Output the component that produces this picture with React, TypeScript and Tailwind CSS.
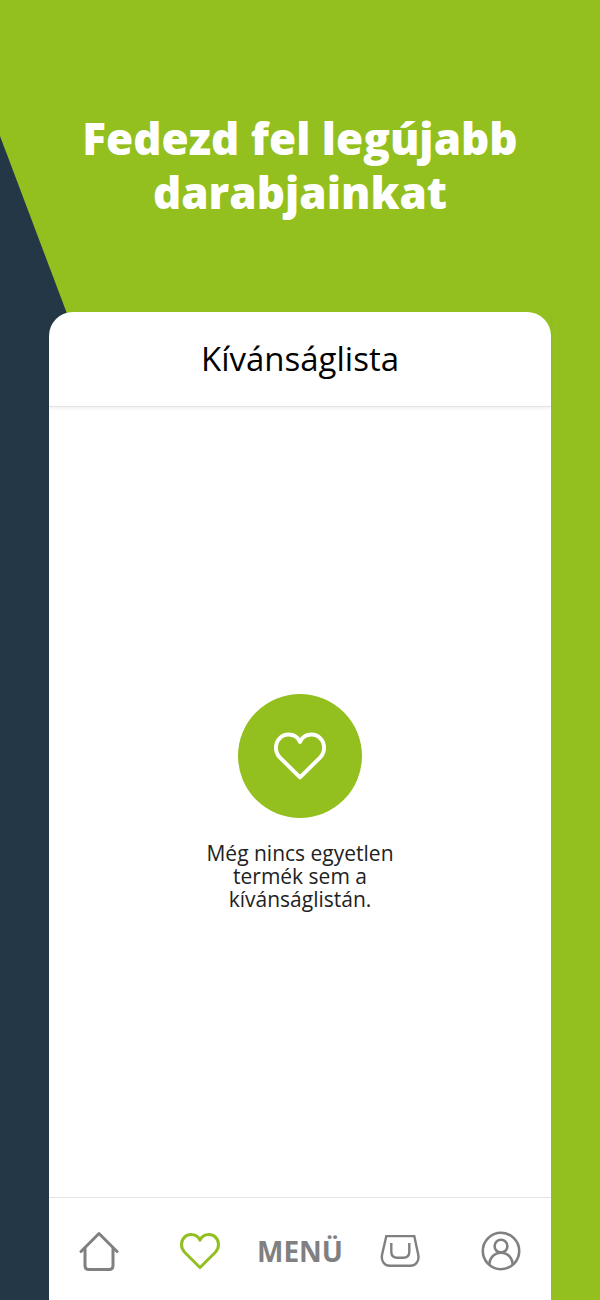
import type { ReactNode } from "react";

function Heart({ className, strokeWidth }: { className: string; strokeWidth: number }) {
  return (
    <svg viewBox="0 0 40 40" fill="none" stroke="currentColor" strokeWidth={strokeWidth} strokeLinejoin="round" className={className} aria-hidden="true">
      <path d="M20 36.5 4.6 21.2C2.6 19.2 1.5 16.6 1.5 13.6C1.5 7.8 5.8 3.5 11.2 3.5C15.2 3.5 18.4 5.6 20 9.2C21.6 5.6 24.8 3.5 28.8 3.5C34.2 3.5 38.5 7.8 38.5 13.6C38.5 16.6 37.4 19.2 35.4 21.2Z" />
    </svg>
  );
}

function House() {
  return (
    <svg viewBox="0 0 40 40" fill="none" stroke="currentColor" strokeWidth="3" strokeLinecap="round" strokeLinejoin="round" className="size-10" aria-hidden="true">
      <path d="M2 20.5 20 2.5 38 20.5" />
      <path d="M6 17V34.5Q6 38.5 10 38.5H30Q34 38.5 34 34.5V17" />
    </svg>
  );
}

function Bag() {
  return (
    <svg viewBox="0 0 40 40" fill="none" stroke="currentColor" strokeWidth="2.4" strokeLinejoin="miter" className="size-10" aria-hidden="true">
      <path d="M6.3 5.1H34.3L38.2 23.5C39.5 29.5 36.2 34.7 30.5 34.7H9.8C4 34.7 0.9 29.5 2.1 23.5Z" />
      <path d="M11.3 12V20.8Q11.3 26.8 17.3 26.8H23.3Q29.3 26.8 29.3 20.8V12" />
    </svg>
  );
}

function Person() {
  return (
    <svg viewBox="0 0 40 40" fill="none" stroke="currentColor" strokeWidth="2.6" className="size-10" aria-hidden="true">
      <circle cx="20" cy="20" r="18.2" />
      <circle cx="20" cy="15.2" r="6.4" />
      <path d="M8.4 34C8.4 26.8 13.4 21.8 20 21.8S31.6 26.8 31.6 34" />
    </svg>
  );
}

function Tab({ label, active, children }: { label: string; active?: boolean; children: ReactNode }) {
  return (
    <a
      href="#"
      aria-label={label}
      aria-current={active ? "page" : undefined}
      className={active ? "flex items-center justify-center text-[#92bf20]" : "flex items-center justify-center text-[#808080]"}
    >
      {children}
    </a>
  );
}

export default function App() {
  return (
    <div className="relative isolate flex min-h-screen flex-col bg-[#93c01f] font-['Open_Sans',sans-serif]">
      <div className="absolute inset-0 -z-10 bg-[#243746] [clip-path:polygon(0_136px,439px_1300px,439px_100%,0_100%)]" />

      <div className="px-12 pt-[111px] pb-[93px]">
        <h1 className="text-center text-[44px] leading-[54px] font-extrabold text-white">
          Fedezd fel legújabb
          <br />
          darabjainkat
        </h1>
      </div>

      <main className="mx-[49px] flex grow flex-col rounded-t-3xl bg-white">
        <header className="border-b border-[#e4e4e4] px-6 py-6 shadow-[0_2px_3px_rgba(0,0,0,0.05)]">
          <h2 className="text-center text-[33px] leading-[46px] font-medium text-black">Kívánságlista</h2>
        </header>

        <section className="flex grow flex-col items-center justify-center gap-6">
          <div className="flex size-[124px] items-center justify-center rounded-full bg-[#93c01f] text-white">
            <Heart className="size-[52px]" strokeWidth={3} />
          </div>
          <p className="text-center text-[21px] leading-[23px] font-medium text-[#222222]">
            Még nincs egyetlen
            <br />
            termék sem a
            <br />
            kívánságlistán.
          </p>
        </section>

        <nav aria-label="Menü" className="grid h-[103px] grid-cols-5 border-t border-[#e2e4e5] pt-[3px]">
          <Tab label="Kezdőlap"><House /></Tab>
          <Tab label="Kívánságlista" active><Heart className="size-10" strokeWidth={3} /></Tab>
          <Tab label="Menü"><span className="text-[28px] leading-8 font-bold">MENÜ</span></Tab>
          <Tab label="Kosár"><Bag /></Tab>
          <Tab label="Fiók"><Person /></Tab>
        </nav>
      </main>
    </div>
  );
}
